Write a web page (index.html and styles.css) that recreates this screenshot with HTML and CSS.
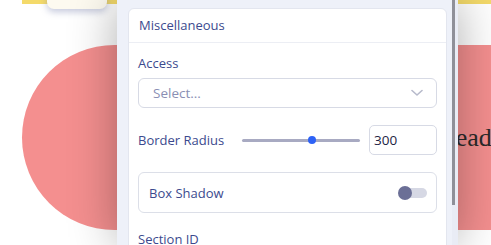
FILE: index.html
```html
<!DOCTYPE html>
<html>
<head>
<meta charset="utf-8">
<link rel="stylesheet" href="styles.css">
</head>
<body>
<div class="page">
  <div class="topbar"><div class="tab"></div></div>
  <div class="hero"><h1 class="hero-title">Heading</h1></div>
</div>

<aside class="panel">
  <div class="panel-scroll">
    <section class="card">
      <header class="card-head">Miscellaneous</header>
      <div class="card-body">
        <div class="field">
          <label class="label">Access</label>
          <div class="select">
            <span class="placeholder">Select...</span>
            <svg class="chev" width="12" height="8" viewBox="0 0 12 8"><path d="M1 1.5 L6 6 L11 1.5" fill="none" stroke="#b7bacb" stroke-width="1.6" stroke-linecap="round" stroke-linejoin="round"/></svg>
          </div>
        </div>
        <div class="field row">
          <label class="label row-label">Border Radius</label>
          <div class="slider"><div class="track"></div><div class="thumb"></div></div>
          <div class="num">300</div>
        </div>
        <div class="field">
          <div class="switch-box">
            <span class="switch-label">Box Shadow</span>
            <span class="toggle"><span class="knob"></span></span>
          </div>
        </div>
        <div class="field">
          <label class="label">Section ID</label>
        </div>
      </div>
    </section>
  </div>
  <div class="scrollbar"><div class="thumb-bar"></div></div>
</aside>
</body>
</html>
```

FILE: styles.css
```css
html, body {
  margin: 0;
  padding: 0;
  background: #ffffff;
  overflow: hidden;
  width: 491px;
  height: 245px;
}
body {
  position: relative;
  font-family: "Open Sans", "Noto Sans", sans-serif;
}
.page {
  padding-left: 22px;
}
.topbar {
  height: 4px;
  background: #f4da6a;
  position: relative;
  margin-right: -40px;
}
.tab {
  position: absolute;
  left: 25px;
  top: -6px;
  width: 60px;
  height: 15px;
  background: #fdfaf0;
  border-radius: 0 0 7px 7px;
  box-shadow: 0 3px 7px rgba(110, 120, 170, 0.4);
}
.hero {
  margin-top: 41px;
  height: 185px;
  width: 620px;
  border-radius: 300px;
  background: #f48f8f;
  display: flex;
  align-items: center;
  padding-left: 415px;
  box-sizing: border-box;
}
.hero-title {
  margin: 0;
  font-family: "Liberation Serif", serif;
  font-weight: normal;
  font-size: 26px;
  color: #2a2a2a;
  white-space: nowrap;
}
.panel {
  position: absolute;
  left: 117px;
  top: 0;
  width: 341px;
  height: 245px;
  background: #eef1f9;
  box-shadow: 0 0 45px rgba(0, 0, 0, 0.32);
  display: flex;
}
.panel-scroll {
  flex: 1;
  padding: 8px 5px 0 11px;
  overflow: hidden;
}
.card {
  background: #ffffff;
  border: 1px solid #e3e6ef;
  border-radius: 6px;
}
.card-head {
  height: 33px;
  line-height: 33px;
  padding-left: 10px;
  font-size: 13px;
  color: #3c4a8e;
  border-bottom: 1px solid #eceef4;
}
.card-body {
  padding: 11px 9px 0 9px;
}
.field {
  margin-bottom: 17px;
}
.label {
  display: block;
  font-size: 13px;
  line-height: 18px;
  color: #3c4a8e;
  margin-bottom: 6px;
}
.select {
  height: 28px;
  border: 1px solid #d7dae5;
  border-radius: 6px;
  display: flex;
  align-items: center;
  justify-content: space-between;
  padding: 0 13px 0 14px;
}
.placeholder {
  font-size: 13.5px;
  color: #8a8fb4;
}
.row {
  display: flex;
  align-items: center;
  height: 30px;
}
.row-label {
  margin-bottom: 0;
  width: 104px;
  flex: none;
}
.slider {
  position: relative;
  width: 118px;
  height: 8px;
  display: flex;
  align-items: center;
}
.track {
  width: 100%;
  height: 3px;
  border-radius: 2px;
  background: #a8aac2;
}
.thumb {
  position: absolute;
  left: 66px;
  top: 0;
  width: 8px;
  height: 8px;
  border-radius: 50%;
  background: #2d62f6;
}
.num {
  width: 62px;
  height: 28px;
  line-height: 28px;
  border: 1px solid #d7dae5;
  border-radius: 5px;
  padding-left: 4px;
  font-size: 13.5px;
  color: #1d2444;
  margin-left: auto;
}
.switch-box {
  height: 39px;
  border: 1px solid #dcdfe8;
  border-radius: 6px;
  display: flex;
  align-items: center;
  justify-content: space-between;
  padding: 0 9px 0 10px;
}
.switch-label {
  font-size: 13px;
  color: #3c4a8e;
}
.toggle {
  position: relative;
  width: 22px;
  height: 10px;
  border-radius: 5px;
  background: #d6d8e4;
}
.knob {
  position: absolute;
  left: -7px;
  top: -2px;
  width: 14px;
  height: 14px;
  border-radius: 50%;
  background: #6b6f96;
}
.scrollbar {
  width: 6px;
  background: #e9ecf5;
}
.thumb-bar {
  width: 3px;
  height: 205px;
  background: #8f9099;
}
```
